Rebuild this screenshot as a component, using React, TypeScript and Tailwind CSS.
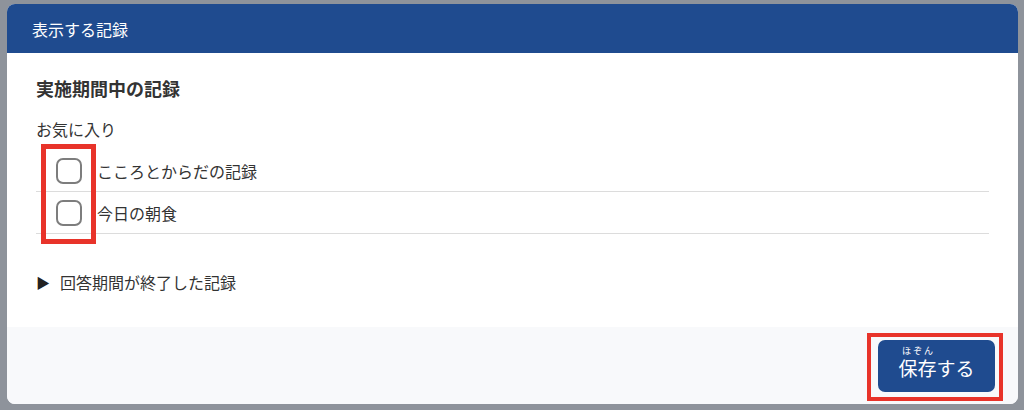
import React from "react";

const FONT = { fontFamily: '"Noto Sans CJK JP", "Noto Sans", sans-serif' };

function Checkbox() {
  return (
    <div className="w-[26px] h-[26px] rounded-[7px] border-2 border-[#7d7d7d] bg-white shrink-0" />
  );
}

function Row({ label }: { label: string }) {
  return (
    <div className="flex items-center h-[42px] border-b border-[#dcdcdc]">
      <div className="ml-[20px] mr-[15px]">
        <Checkbox />
      </div>
      <span className="text-[16px] text-[#333]">{label}</span>
    </div>
  );
}

export default function App() {
  return (
    <div
      className="relative w-[1024px] h-[410px] bg-[#8e939b] pt-[4px] pl-[7px]"
      style={FONT}
    >
      <div className="w-[1011px] h-[400px] rounded-[8px] bg-white overflow-hidden flex flex-col">
        <div className="h-[49px] shrink-0 bg-[#1f4b8f] pl-[25px] flex items-center text-white text-[16px]">
          表示する記録
        </div>
        <div className="flex-1 px-[29px] pt-[22px]">
          <div className="text-[18px] font-bold text-[#333] leading-[27px]">実施期間中の記録</div>
          <div className="mt-[15px] text-[16px] text-[#333] leading-[24px]">お気に入り</div>
          <div className="mt-[9px]">
            <Row label="こころとからだの記録" />
            <Row label="今日の朝食" />
          </div>
          <div className="mt-[36px] flex items-center text-[16px] text-[#333] leading-[24px]">
            <span className="text-[14px] mr-[10px] text-[#222]">▶</span>
            回答期間が終了した記録
          </div>
        </div>
        <div className="h-[77px] shrink-0 bg-[#f8f9fb] flex justify-end items-start pt-[13px] pr-[23px]">
          <button className="w-[117px] h-[52px] rounded-[7px] bg-[#1f4b8f] text-white text-[19px] flex items-end justify-center pb-[14px]">
            <span className="inline-flex flex-col items-center">
              <span className="text-[9px] leading-[9px] mb-[3px] tracking-[2px] pl-[2px]">ほぞん</span>
              <span className="leading-[20px]">保存</span>
            </span>
            <span className="leading-[20px]">する</span>
          </button>
        </div>
      </div>
      <div className="absolute left-[41px] top-[144px] w-[55px] h-[100px] border-[5px] border-[#e8332a]" />
      <div className="absolute left-[867px] top-[333px] w-[136px] h-[68px] border-[4px] border-[#e8332a]" />
    </div>
  );
}
